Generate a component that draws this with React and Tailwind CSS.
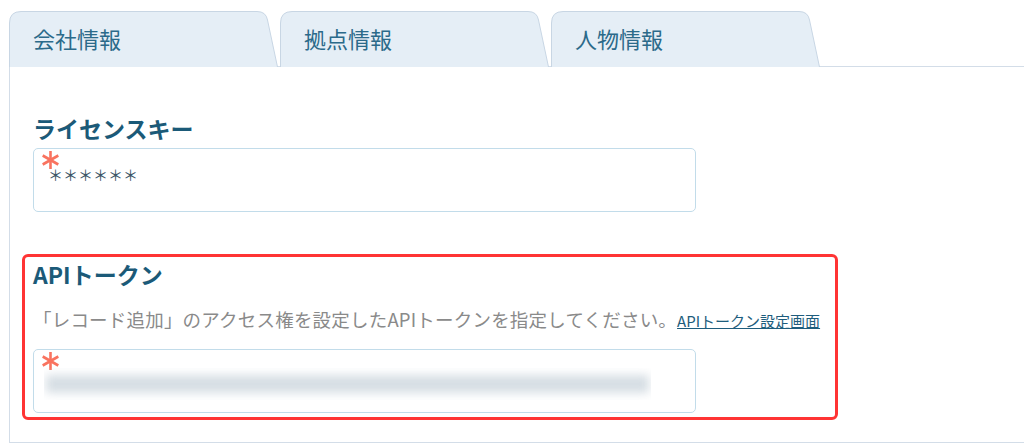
import React from "react";

const FONT = { fontFamily: '"Noto Sans CJK JP", "Noto Sans", sans-serif' };

// tab shape with a slanted right edge
function Tab({ label }) {
  return (
    <div className="relative w-[269px] h-[56px]">
      <svg className="absolute inset-0" width="269" height="56" viewBox="0 0 269 56">
        <path
          d="M0.5,56 V12 Q0.5,0.5 12,0.5 H248 Q257,0.5 258.5,9 L268.5,56"
          fill="#e5eef6"
          stroke="#c8d6e4"
          strokeWidth="1"
        />
      </svg>
      <div className="relative pl-[24px] pt-[12px] text-[22px] leading-[30px] text-[#2b6a8a]">{label}</div>
    </div>
  );
}

function Asterisk() {
  return (
    <svg className="absolute left-[7px] top-[1px]" width="19" height="20" viewBox="0 0 19 20">
      <g stroke="#f9735f" strokeWidth="2.6" strokeLinecap="butt">
        <line x1="9.5" y1="1" x2="9.5" y2="19" />
        <line x1="1.7" y1="5.5" x2="17.3" y2="14.5" />
        <line x1="1.7" y1="14.5" x2="17.3" y2="5.5" />
      </g>
    </svg>
  );
}

export default function App() {
  return (
    <div className="w-[1024px] h-[444px] bg-white overflow-hidden" style={FONT}>
      <div className="flex gap-[2px] pl-[9px] pt-[11px]">
        <Tab label="会社情報" />
        <Tab label="拠点情報" />
        <Tab label="人物情報" />
      </div>
      <div className="ml-[9px] -mt-px h-[377px] border-l border-t border-b border-[#d3dde8] pl-[12px]">
        <div className="pl-[11px] pt-[46px]">
          <div className="text-[23px] leading-[30px] font-bold text-[#1b5a78]">ライセンスキー</div>
          <div className="relative mt-[5px] w-[663px] h-[64px] rounded-[5px] border border-[#c2dcea]">
            <Asterisk />
            <div className="pl-[14px] pt-[14px] text-[15px] leading-[24px] text-[#3a5566]">＊＊＊＊＊＊</div>
          </div>
        </div>
        <div className="mt-[42px] w-[816px] h-[166px] rounded-[6px] border-[3px] border-[#ff3434] pl-[8px] pt-[2px]">
          <div className="text-[23px] leading-[30px] font-bold text-[#1b5a78]">APIトークン</div>
          <div className="mt-[16px] flex items-baseline whitespace-nowrap leading-[28px]">
            <span className="text-[18.5px] tracking-[0.2px] text-[#8a8a8a]">「レコード追加」のアクセス権を設定したAPIトークンを指定してください。</span>
            <a className="ml-0 text-[15px] text-[#1e5d7d] underline">APIトークン設定画面</a>
          </div>
          <div className="relative mt-[14px] w-[663px] h-[64px] rounded-[5px] border border-[#c2dcea]">
            <Asterisk />
            <div className="ml-[10px] mt-[18px] w-[607px] h-[32px] overflow-hidden">
              <div className="mx-[2px] my-[7px] h-[18px] bg-[#d6dee4] blur-[5px]" />
            </div>
          </div>
        </div>
      </div>
    </div>
  );
}
